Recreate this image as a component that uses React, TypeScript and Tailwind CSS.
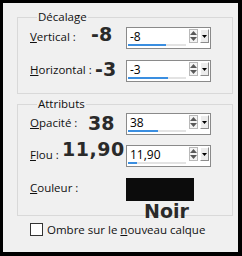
import type { ReactNode } from 'react';

const FONT = "font-['Open_Sans',sans-serif]";
const BIG = "font-['DejaVu_Sans',sans-serif] font-bold text-[19px] leading-none text-[#2a2a2a]";

function Spin({ valeur, barre }: { valeur: string; barre: number }) {
  return (
    <div className="relative flex h-[22px] w-[85px] items-start border border-[#8a8a8a] bg-white">
      <span className="ml-[3px] mt-[2px] text-[12px] leading-[14px] text-black">{valeur}</span>
      {/* barre de progression */}
      <div className="absolute bottom-[2px] left-[1px] h-[2px] w-[58px] bg-[#e3e3e3]">
        <div className="h-full bg-[#3a8ee0]" style={{ width: barre }} />
      </div>
      <div className="ml-auto mt-[1px] flex h-[14px] w-[9px] flex-col items-center justify-center gap-[2px] border border-[#b9b9b9] bg-[#f4f4f4]">
        <svg width="7" height="4" viewBox="0 0 7 4"><path d="M3.5 0 L7 4 L0 4 Z" fill="#5a5a5a" /></svg>
        <svg width="7" height="4" viewBox="0 0 7 4"><path d="M0 0 L7 0 L3.5 4 Z" fill="#5a5a5a" /></svg>
      </div>
      <div className="ml-[2px] mr-[1px] mt-[1px] flex h-[14px] w-[9px] items-center justify-center border-b border-r border-[#8c8c8c] border-l-white border-t-white border-l border-t bg-[#ececec]">
        <svg width="5" height="3" viewBox="0 0 5 3"><path d="M0 0 L5 0 L2.5 3 Z" fill="#000" /></svg>
      </div>
    </div>
  );
}

function Ligne({ etiquette, children }: { etiquette: ReactNode; children: ReactNode }) {
  return (
    <div className="flex items-center">
      <span className="w-[96px] pb-[3px] text-[11.5px] text-[#111]">{etiquette}</span>
      {children}
    </div>
  );
}

function Groupe({ titre, children, className }: { titre: string; children: ReactNode; className?: string }) {
  return (
    <fieldset className={`mr-[5px] ml-[14px] border border-[#d9d9d9] pl-[12px] ${className ?? ''}`}>
      <legend className="ml-[7px] px-[1px] text-[11.5px] leading-[16px] text-[#111]">{titre}</legend>
      {children}
    </fieldset>
  );
}

export default function App() {
  return (
    <div className={`relative h-[256px] w-[242px] border-b-[4px] border-l-[3px] border-r-[4px] border-t-[3px] border-black bg-[#f0f0f0] ${FONT}`}>
      <div className="pt-[6px]">
        <Groupe titre="Décalage" className="h-[85px]">
          <div className="mt-[2px] flex flex-col gap-[11px]">
            <Ligne etiquette={<><u>V</u>ertical :</>}>
              <Spin valeur="-8" barre={38} />
            </Ligne>
            <Ligne etiquette={<><u>H</u>orizontal :</>}>
              <Spin valeur="-3" barre={40} />
            </Ligne>
          </div>
        </Groupe>

        <Groupe titre="Attributs" className="mt-[2px] h-[120px]">
          <div className="mt-[1px] flex flex-col gap-[10px]">
            <Ligne etiquette={<><u>O</u>pacité :</>}>
              <Spin valeur="38" barre={30} />
            </Ligne>
            <Ligne etiquette={<><u>F</u>lou :</>}>
              <Spin valeur="11,90" barre={9} />
            </Ligne>
            <Ligne etiquette={<><u>C</u>ouleur :</>}>
              <div className="mt-[1px] h-[23px] w-[68px] bg-[#0c0c0c]" />
            </Ligne>
          </div>
        </Groupe>

        <label className="ml-[27px] mt-[5px] flex items-center gap-[4px] text-[11.5px] text-[#111]">
          <span className="h-[13px] w-[13px] border border-[#333] bg-white" />
          <span>Ombre sur le <u>n</u>ouveau calque</span>
        </label>
      </div>

      {/* annotations */}
      <span className={`absolute left-[88px] top-[22px] ${BIG}`}>-8</span>
      <span className={`absolute left-[92px] top-[57px] ${BIG}`}>-3</span>
      <span className={`absolute left-[85px] top-[111px] ${BIG}`}>38</span>
      <span className={`absolute left-[59px] top-[137px] tracking-[0.5px] ${BIG}`}>11,90</span>
      <span className={`absolute left-[141px] top-[199px] ${BIG}`}>Noir</span>
    </div>
  );
}
